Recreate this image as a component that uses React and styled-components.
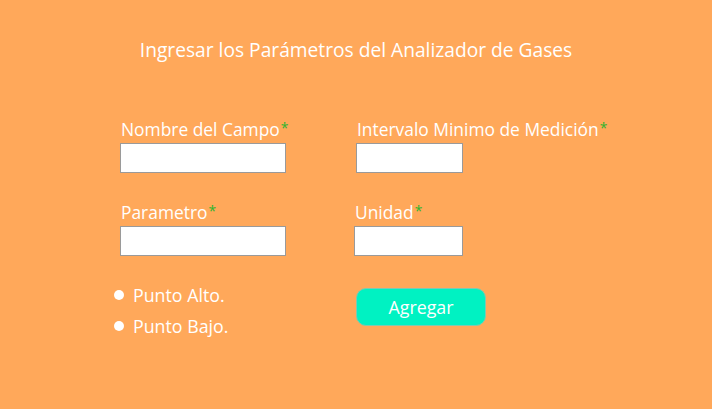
import React, { useState } from 'react'
import styled, { createGlobalStyle } from 'styled-components'

const GlobalStyle = createGlobalStyle`
  html, body {
    margin: 0;
    padding: 0;
    background-color: #ffa85a;
  }
  * {
    box-sizing: border-box;
  }
`;

const App = () => {
  const [nombre, setNombre] = useState('');
  const [intervalo, setIntervalo] = useState('');
  const [parametro, setParametro] = useState('');
  const [unidad, setUnidad] = useState('');

  return (
    <>
      <GlobalStyle />
      <PageContainer>
        <Title>Ingresar los Parámetros del Analizador de Gases</Title>
        <FormGrid>
          <FormGroup>
            <InputTitle>Nombre del Campo<Required>*</Required></InputTitle>
            <Input width={166} value={nombre} onChange={(e) => setNombre(e.target.value)} />
          </FormGroup>
          <FormGroup>
            <InputTitle>Intervalo Minimo de Medición<Required>*</Required></InputTitle>
            <Input width={107} value={intervalo} onChange={(e) => setIntervalo(e.target.value)} />
          </FormGroup>
          <FormGroup>
            <InputTitle>Parametro<Required>*</Required></InputTitle>
            <Input width={166} value={parametro} onChange={(e) => setParametro(e.target.value)} />
          </FormGroup>
          <FormGroup shift={-2}>
            <InputTitle>Unidad<Required>*</Required></InputTitle>
            <Input width={109} value={unidad} onChange={(e) => setUnidad(e.target.value)} />
          </FormGroup>
          <PointList>
            <Point>Punto Alto.</Point>
            <Point>Punto Bajo.</Point>
          </PointList>
          <ButtonCell>
            <AddButton>Agregar</AddButton>
          </ButtonCell>
        </FormGrid>
      </PageContainer>
    </>
  );
};

const PageContainer = styled.div`
  width: 712px;
  height: 409px;
  background-color: #ffa85a;
  font-family: 'Open Sans', 'Noto Sans', sans-serif;
  color: white;
  padding-top: 36px;
`;

const Title = styled.h1`
  font-size: 19.2px;
  font-weight: 400;
  margin: 0;
  text-align: center;
  line-height: 28px;
`;

const FormGrid = styled.div`
  display: grid;
  grid-template-columns: 236px 260px;
  row-gap: 29px;
  padding-left: 120px;
  margin-top: 55px;
`;

const FormGroup = styled.div`
  display: flex;
  flex-direction: column;
  gap: 4px;
  margin-left: ${(p) => p.shift || 0}px;
`;

const InputTitle = styled.label`
  font-size: 17.4px;
  line-height: 20px;
  height: 20px;
  padding-left: 1px;
`;

const Required = styled.span`
  color: #2fb52f;
  font-size: 14px;
  line-height: 0;
  position: relative;
  top: -3px;
  margin-left: 1px;
`;

const Input = styled.input`
  width: ${(p) => p.width}px;
  height: 30px;
  border: 1px solid #9a9a9a;
  background: white;
  padding: 2px 6px;
  font-size: 14px;
  margin: 0;
  &:focus {
    outline: none;
  }
`;

const PointList = styled.ul`
  margin: 0;
  margin-top: -1px;
  padding: 0;
  list-style: none;
  display: flex;
  flex-direction: column;
  gap: 9px;
`;

const Point = styled.li`
  display: flex;
  align-items: center;
  gap: 9px;
  font-size: 17.8px;
  line-height: 22px;
  margin-left: -6px;
  &::before {
    content: '';
    width: 10px;
    height: 10px;
    border-radius: 50%;
    background: white;
  }
`;

const ButtonCell = styled.div`
  padding-top: 3px;
`;

const AddButton = styled.button`
  width: 130px;
  height: 38px;
  padding: 0;
  background-color: #00f2c2;
  color: white;
  border: 1px solid #7fc9b0;
  border-radius: 10px;
  font-family: 'Open Sans', 'Noto Sans', sans-serif;
  font-size: 17.8px;
  cursor: pointer;
`;

export default App;
